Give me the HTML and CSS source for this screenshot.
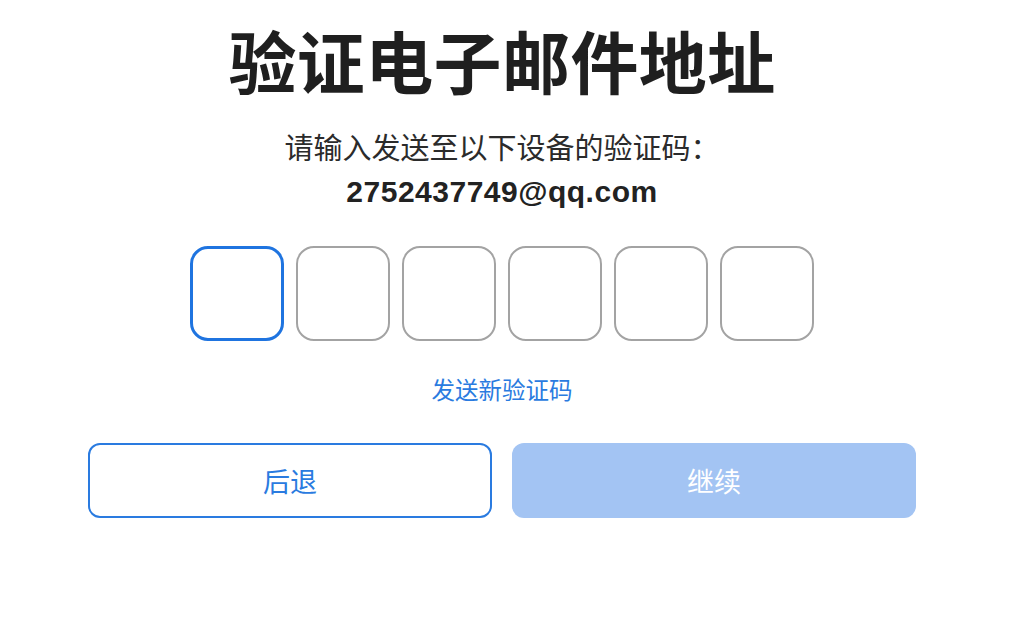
FILE: index.html
```html
<!DOCTYPE html>
<html lang="zh-CN">
<head>
<meta charset="utf-8">
<title>验证电子邮件地址</title>
<link rel="stylesheet" href="styles.css">
</head>
<body>
<main class="page">
  <h1 class="title">验证电子邮件地址</h1>
  <p class="subtitle">请输入发送至以下设备的验证码：</p>
  <p class="email">2752437749@qq.com</p>
  <div class="code-row">
    <div class="code-box active"></div>
    <div class="code-box"></div>
    <div class="code-box"></div>
    <div class="code-box"></div>
    <div class="code-box"></div>
    <div class="code-box"></div>
  </div>
  <a class="resend" href="#">发送新验证码</a>
  <div class="actions">
    <button class="btn btn-back" type="button">后退</button>
    <button class="btn btn-continue" type="button">继续</button>
  </div>
</main>
</body>
</html>
```

FILE: styles.css
```css
html, body {
  margin: 0;
  padding: 0;
  background: #ffffff;
}

body {
  font-family: "Liberation Sans", "Noto Sans CJK SC", sans-serif;
  color: #222222;
}

.page {
  width: 1004px;
  display: flex;
  flex-direction: column;
  align-items: center;
  padding-top: 26px;
}

.title {
  margin: 0;
  font-family: "Noto Sans CJK SC", sans-serif;
  font-size: 68px;
  line-height: 68px;
  font-weight: 700;
  letter-spacing: 0.4px;
  color: #1f1f1f;
}

.subtitle {
  margin: 38px 0 0;
  font-family: "Noto Sans CJK SC", sans-serif;
  font-size: 29px;
  line-height: 29px;
  color: #2b2b2b;
}

.email {
  margin: 16px 0 0;
  font-size: 30px;
  line-height: 30px;
  font-weight: 700;
  letter-spacing: 0.5px;
  color: #222222;
}

.code-row {
  margin-top: 39px;
  display: flex;
  gap: 11.5px;
}

.code-box {
  box-sizing: border-box;
  width: 94.5px;
  height: 95px;
  border: 2px solid #a3a3a3;
  border-radius: 18px;
}

.code-box.active {
  border: 3px solid #1f74e0;
}

.resend {
  margin-top: 36px;
  font-family: "Noto Sans CJK SC", sans-serif;
  font-size: 23.5px;
  line-height: 24px;
  color: #2a7be0;
  text-decoration: none;
}

.actions {
  margin-top: 42px;
  display: flex;
  gap: 20px;
}

.btn {
  box-sizing: border-box;
  width: 404px;
  height: 75px;
  border-radius: 12px;
  font-family: "Noto Sans CJK SC", sans-serif;
  font-size: 27px;
  padding: 0;
  cursor: pointer;
}

.btn-back {
  background: #ffffff;
  border: 2px solid #2a7be0;
  color: #2a7be0;
}

.btn-continue {
  background: #a3c4f3;
  border: none;
  color: #ffffff;
}
```
